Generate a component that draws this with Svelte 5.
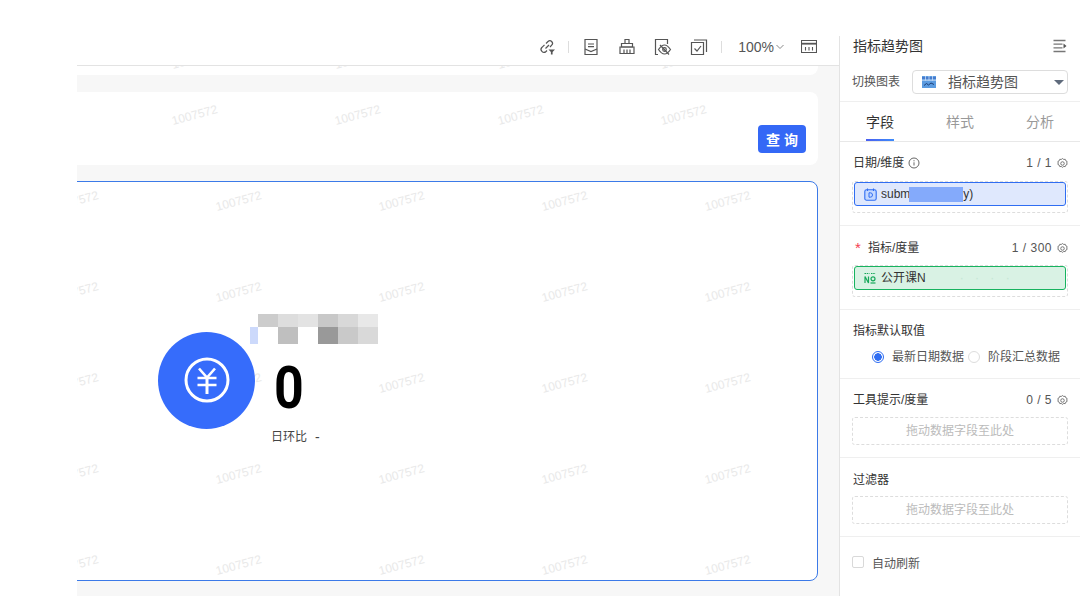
<script>
  const wmText = '1007572'
  const strip = Array(4).fill(wmText)
  const row = Array(4).fill(wmText)
  const big = Array(5 * 6).fill(wmText)

  const mosaicTop = ['#cccccc', '#dddddd', '#e3e3e3', '#c8c8c8', '#d8d8d8', '#e8e8e8']
  const mosaicBottom = ['#ffffff', '#bfbfbf', '#ffffff', '#999999', '#c9c9c9', '#d9d9d9']
</script>

<div class="page">
  <div class="left"></div>

  <div class="main">
    <div class="toolbar">
      <svg class="ic i-link" width="18" height="18" viewBox="0 0 18 18" fill="none" stroke="#555" stroke-width="1.2">
        <path d="M8 5.500l2-2a2.600 2.600 0 0 1 3.700 3.700L12 9" />
        <path d="M6.500 6.800L4 9.300a2.900 2.900 0 0 0 4 4.200l1-1" />
        <path d="M7.500 10.500L11 7" />
        <path d="M10.500 11.500h6.500l-2.400 2.600v2.400h-1.700v-2.400z" fill="#555" stroke="none" />
      </svg>
      <i class="sep s1"></i>
      <svg class="ic i-report" width="16" height="18" viewBox="0 0 16 18" fill="none" stroke="#555" stroke-width="1.2">
        <path d="M2 1.500h12v15H2z" />
        <path d="M5 6h6M5 8.700h6" />
        <path d="M2 11l6 2.600 6-2.600" />
      </svg>
      <svg class="ic i-brush" width="18" height="18" viewBox="0 0 18 18" fill="none" stroke="#555" stroke-width="1.2">
        <path d="M7 1.500h4v4H7z" />
        <path d="M3.500 5.500h11v3.500h-11z" />
        <path d="M2 9h14v6.500H2z" />
        <path d="M6 11.500v4M9 11.500v4M12 11.500v4" />
      </svg>
      <svg class="ic i-eye" width="18" height="18" viewBox="0 0 18 18" fill="none" stroke="#555" stroke-width="1.2">
        <path d="M4 16.500H1.500v-15h12V6" />
        <path d="M4.500 11.500c2-3 4-4.500 6-4.500s4 1.500 6 4.500c-2 3-4 4.500-6 4.500s-4-1.500-6-4.500z" />
        <circle cx="10.500" cy="11.500" r="1.800" />
        <path d="M6 7l9 9.500" />
      </svg>
      <svg class="ic i-check" width="18" height="18" viewBox="0 0 18 18" fill="none" stroke="#555" stroke-width="1.2">
        <path d="M1.500 4.500h12v12h-12z" />
        <path d="M4 2h12.500v12" />
        <path d="M4.500 10.500l2.500 2.500 4-5" />
      </svg>
      <i class="sep s2"></i>
      <span class="zoom">100%</span>
      <svg class="chev" width="8" height="6" viewBox="0 0 8 6" fill="none" stroke="#888" stroke-width="1"><path d="M0.500 1l3.500 3.500L7.500 1" /></svg>
      <svg class="ic" width="16" height="13" viewBox="0 0 16 13" fill="none" stroke="#555" stroke-width="1.1">
        <path d="M0.500 0.500h15v12h-15z" />
        <path d="M0.500 3.700h15" stroke-width="1.800" />
        <path d="M4.500 7v3.500M8 7v3.500M11.500 7v3.500" />
      </svg>
    </div>

    <div class="canvas">
      <div class="card strip">
        <div class="wm wm-strip">{#each strip as t}<span>{t}</span>{/each}</div>
      </div>

      <div class="card query">
        <div class="wm wm-query">{#each row as t}<span>{t}</span>{/each}</div>
        <button class="btn">查 询</button>
      </div>

      <div class="card chart">
        <div class="wm wm-chart">{#each big as t}<span>{t}</span>{/each}</div>
        <div class="kpi">
          <div class="coin">
            <svg width="46" height="46" viewBox="0 0 46 46" fill="none" stroke="#fff" stroke-width="3">
              <circle cx="23" cy="23" r="21" />
              <path d="M15 11.500l8 9 8-9" stroke-width="2.600" />
              <path d="M13.500 21h19M13.500 28h19" stroke-width="2.600" />
              <path d="M23 20v17" stroke-width="3" />
            </svg>
          </div>
          <div class="kpi-body">
            <div class="mosaic">
              <i class="m-gap"></i>{#each mosaicTop as c}<i class="m-a" style="background:{c}"></i>{/each}
              <i class="m-b m-gap" style="background:#ccd9fb"></i>{#each mosaicBottom as c}<i class="m-b" style="background:{c}"></i>{/each}
            </div>
            <div class="value"><span>0</span></div>
            <div class="ratio"><span>日环比</span><span class="dash">-</span></div>
          </div>
        </div>
      </div>
    </div>
  </div>

  <aside class="panel">
    <div class="head">
      <div class="title-row">
        <span class="title">指标趋势图</span>
        <svg width="14" height="14" viewBox="0 0 14 14" fill="none" stroke="#777" stroke-width="1.300">
          <path d="M0.500 1.500h12M0.500 5.200h9M0.500 8.800h9M0.500 12.500h12" />
          <path d="M10.500 4.500l3 2.500-3 2.500z" fill="#555" stroke="none" />
        </svg>
      </div>
      <div class="switch-row">
        <span class="switch-label">切换图表</span>
        <div class="select">
          <svg width="14" height="12" viewBox="0 0 14 12">
            <rect width="14" height="12" fill="#5b9be0" />
            <path d="M0 2h14" stroke="#3f6fc4" stroke-width="1.400" />
            <path d="M0 4.200h14" stroke="#dbe8fa" stroke-width="0.800" />
            <path d="M3.500 0v4.500M7 0v4.500M10.500 0v4.500" stroke="#dbe8fa" stroke-width="0.700" />
            <path d="M2 9.500l2.500-2 2 1.500 2.500-2 3 1.500" fill="none" stroke="#1c3f78" stroke-width="1" />
          </svg>
          <span class="select-text">指标趋势图</span>
          <i class="caret"></i>
        </div>
      </div>
    </div>

    <div class="tabs">
      <span class="tab active">字段</span>
      <span class="tab">样式</span>
      <span class="tab">分析</span>
    </div>

    <section class="sec">
      <div class="sec-title">
        <span>日期/维度</span>
        <svg class="info" width="12" height="12" viewBox="0 0 12 12" fill="none" stroke="#555" stroke-width="0.900">
          <circle cx="6" cy="6" r="5" />
          <path d="M6 5.300v3.200M6 3.200v1.100" />
        </svg>
        <span class="count">1 / 1</span>
        {@render gear()}
      </div>
      <div class="drop has-chip">
        <div class="chip date">
          <svg width="13" height="13" viewBox="0 0 13 13" fill="none" stroke="#2f6df2" stroke-width="1.100">
            <rect x="0.800" y="1.800" width="11.400" height="10.400" rx="1.800" fill="#c4d8ff" />
            <path d="M3.500 0.500v2.500M9.500 0.500v2.500" />
            <path d="M5 4.800h1.300a1.900 1.900 0 0 1 0 4.400H5z" stroke-width="1" />
          </svg>
          <span class="chip-text">subm</span><i class="redact"></i><span class="chip-text">y)</span>
        </div>
      </div>
    </section>

    <section class="sec low">
      <div class="sec-title">
        <span class="req">*</span>
        <span>指标/度量</span>
        <span class="count">1 / 300</span>
        {@render gear()}
      </div>
      <div class="drop has-chip">
        <div class="chip metric">
          <svg width="12" height="12" viewBox="0 0 12 12" fill="none" stroke="#16a85a" stroke-width="1.200">
            <path d="M0.500 1.500h5M7 1.500h4.500" stroke-dasharray="1.500 0.700" />
            <path d="M1 11V4.500l3.500 6.500V4.500" />
            <circle cx="9" cy="6.800" r="2" />
            <path d="M6.500 11h5" />
          </svg>
          <span class="chip-text">公开课N</span>
          <span class="faint">· · · ·</span>
        </div>
      </div>
    </section>

    <section class="sec radios-sec">
      <div class="sec-title"><span>指标默认取值</span></div>
      <div class="radios">
        <i class="radio on"></i><span class="radio-label">最新日期数据</span>
        <i class="radio"></i><span class="radio-label">阶段汇总数据</span>
      </div>
    </section>

    <section class="sec tight">
      <div class="sec-title">
        <span>工具提示/度量</span>
        <span class="count">0 / 5</span>
        {@render gear()}
      </div>
      <div class="drop empty">拖动数据字段至此处</div>
    </section>

    <section class="sec tight low">
      <div class="sec-title"><span>过滤器</span></div>
      <div class="drop empty">拖动数据字段至此处</div>
    </section>

    <label class="refresh">
      <i class="check"></i>
      <span>自动刷新</span>
    </label>
  </aside>
</div>

{#snippet gear()}
  <svg class="gear" width="11" height="11" viewBox="0 0 10 10" fill="none" stroke="#666" stroke-width="0.800">
    <path d="M5 0.500l1.100 0.800 1.400-0.100 0.500 1.300 1.200 0.700-0.300 1.300 0.300 1.300-1.200 0.700-0.500 1.300-1.400-0.100-1.100 0.800-1.100-0.800-1.400 0.100-0.500-1.300-1.200-0.700 0.300-1.300-0.300-1.300 1.200-0.700 0.500-1.300 1.400 0.100z" />
    <circle cx="5" cy="5" r="1.600" />
  </svg>
{/snippet}

<style>
  :global(body) {
    margin: 0;
    background: #fff;
  }

  .page {
    display: flex;
    width: 1090px;
    height: 604px;
    padding-top: 36px;
    padding-right: 10px;
    box-sizing: border-box;
    overflow: hidden;
    font-family: "Liberation Sans", "Noto Sans CJK SC", sans-serif;
    color: #333;
  }

  .left {
    width: 77px;
    flex: none;
  }

  .main {
    width: 762px;
    height: 560px;
    display: flex;
    flex-direction: column;
  }

  .toolbar {
    height: 21px;
    flex: none;
    display: flex;
    align-items: center;
    justify-content: flex-end;
    padding: 0 22px 8px 0;
    border-bottom: 1px solid #e3e3e3;
  }

  .ic {
    display: block;
  }

  .i-link {
    margin-right: 12px;
  }

  .i-report {
    margin-right: 19px;
  }

  .i-brush {
    margin-right: 18px;
  }

  .i-eye {
    margin-right: 18px;
  }

  .i-check {
    margin-right: 13px;
  }

  .sep {
    width: 1px;
    height: 12px;
    background: #ddd;
  }

  .s1 {
    margin-right: 14px;
  }

  .s2 {
    margin-right: 16px;
  }

  .zoom {
    font-size: 14px;
    color: #555;
  }

  .chev {
    margin: 0 17px 0 2px;
  }

  .canvas {
    flex: 1;
    background: #f7f7f7;
    overflow: hidden;
    min-height: 0;
  }

  .card {
    position: relative;
    background: #fff;
    margin: 0 21px 0 -20px;
    overflow: hidden;
  }

  .strip {
    height: 9px;
    border-radius: 0 0 8px 8px;
  }

  .query {
    height: 73px;
    margin-top: 17px;
    border-radius: 8px;
    display: flex;
    align-items: flex-end;
    justify-content: flex-end;
    padding: 0 12px 12px 0;
    box-sizing: border-box;
  }

  .btn {
    position: relative;
    width: 48px;
    height: 28px;
    border: 0;
    padding: 0;
    border-radius: 4px;
    background: #3468f6;
    color: #fff;
    font: 700 14px "Liberation Sans", "Noto Sans CJK SC", sans-serif;
  }

  .chart {
    height: 400px;
    margin-top: 16px;
    border: 1px solid #3c7ae8;
    border-radius: 8px;
    box-sizing: border-box;
    display: flex;
    align-items: center;
    padding-left: 100px;
  }

  .wm {
    position: absolute;
    display: grid;
    grid-template-columns: repeat(5, 163px);
    grid-auto-rows: 91px;
    pointer-events: none;
  }

  .wm span {
    display: flex;
    align-items: center;
    justify-content: center;
    font-size: 12px;
    color: #e9e9e9;
    transform: rotate(-15deg);
  }

  .wm-strip {
    left: 55.5px;
    top: -53.5px;
  }

  .wm-query {
    left: 55.5px;
    top: -23.5px;
  }

  .wm-chart {
    left: -64.5px;
    top: -27.5px;
  }

  .kpi {
    position: relative;
    display: flex;
    align-items: center;
    margin-top: -2px;
  }

  .coin {
    width: 97px;
    height: 97px;
    flex: none;
    border-radius: 50%;
    background: #366cfb;
    display: flex;
    align-items: center;
    justify-content: center;
  }

  .kpi-body {
    margin-left: -5px;
    display: flex;
    flex-direction: column;
  }

  .mosaic {
    display: grid;
    grid-template-columns: 8px repeat(6, 20px);
    grid-template-rows: 13px 17px;
  }

  .m-a,
  .m-b {
    display: block;
  }

  .value {
    margin: 19px 0 0 24px;
    height: 50px;
    line-height: 50px;
    font-family: Roboto, sans-serif;
    font-size: 59px;
    font-weight: 700;
    color: #000;
  }

  .value span {
    display: inline-block;
    transform: scaleX(0.88);
    transform-origin: left center;
  }

  .ratio {
    margin: 15px 0 0 21px;
    display: flex;
    font-size: 12px;
    line-height: 18px;
    color: #444;
  }

  .dash {
    margin-left: 8px;
    font-size: 14px;
  }

  .panel {
    width: 241px;
    height: 560px;
    flex: none;
    border-left: 1px solid #e3e3e3;
    box-sizing: border-box;
    display: flex;
    flex-direction: column;
  }

  .head {
    height: 66px;
    flex: none;
    box-sizing: border-box;
    border-bottom: 1px solid #efefef;
    padding: 0 12px 0 13px;
  }

  .title-row {
    height: 20px;
    display: flex;
    align-items: center;
    justify-content: space-between;
    margin-right: 1px;
  }

  .title {
    font-size: 14px;
    line-height: 20px;
  }

  .switch-row {
    margin-top: 14px;
    margin-left: -1px;
    display: flex;
    align-items: center;
  }

  .switch-label {
    width: 60px;
    font-size: 12px;
    line-height: 22px;
    color: #555;
  }

  .select {
    position: relative;
    width: 156px;
    height: 24px;
    box-sizing: border-box;
    border: 1px solid #ddd;
    border-radius: 4px;
    display: flex;
    align-items: center;
    padding-left: 9px;
  }

  .select-text {
    margin: -2px 0 0 12px;
    font-size: 14px;
    color: #555;
  }

  .caret {
    position: absolute;
    right: 3px;
    top: 9px;
    width: 0;
    height: 0;
    border-left: 5px solid transparent;
    border-right: 5px solid transparent;
    border-top: 5px solid #5f6b7c;
  }

  .tabs {
    height: 40px;
    flex: none;
    box-sizing: border-box;
    border-bottom: 1px solid #e8e8e8;
    display: flex;
    padding-left: 26px;
    gap: 52px;
  }

  .tab {
    position: relative;
    width: 28px;
    font-size: 14px;
    line-height: 40px;
    color: #999;
  }

  .tab.active {
    color: #333;
  }

  .tab.active::after {
    content: "";
    position: absolute;
    left: 0;
    right: 0;
    bottom: 0;
    height: 2px;
    background: linear-gradient(90deg, #4a5ff0, #3d8bfa);
  }

  .sec {
    flex: none;
    padding: 12px 12px 12px 13px;
    border-bottom: 1px solid #efefef;
  }

  .sec.low {
    padding-top: 13px;
  }

  .sec-title {
    height: 18px;
    margin-bottom: 9px;
    display: flex;
    align-items: center;
    font-size: 12px;
    line-height: 18px;
    color: #333;
  }

  .low .sec-title {
    margin-bottom: 8px;
  }

  .tight .sec-title {
    margin-bottom: 8px;
  }

  .tight.low .sec-title {
    margin-bottom: 7px;
  }

  .info {
    margin-left: 4px;
  }

  .req {
    width: 13px;
    color: #f5404f;
    font-size: 15px;
    margin-left: 2px;
  }

  .count {
    margin-left: auto;
    color: #555;
    letter-spacing: 0.5px;
  }

  .gear {
    margin-left: 5px;
    flex: none;
  }

  .drop {
    margin-left: -1px;
    width: 216px;
    box-sizing: border-box;
    border: 1px dashed #ddd;
    border-radius: 3px;
  }

  .drop.has-chip {
    height: 32px;
    padding: 0 1px;
  }

  .drop.empty {
    height: 28px;
    text-align: center;
    font-size: 12px;
    line-height: 26px;
    color: #bbb;
  }

  .chip {
    height: 24px;
    box-sizing: border-box;
    border-radius: 3px;
    display: flex;
    align-items: center;
    padding-left: 9px;
    font-size: 12px;
    line-height: 20px;
    color: #333;
  }

  .chip.date {
    background: #dfe8fd;
    border: 1px solid #2f6df2;
  }

  .chip.metric {
    background: #d9f2e4;
    border: 1px solid #17b35f;
  }

  .chip-text {
    margin-left: 4px;
  }

  .metric .chip-text {
    margin-left: 5px;
  }

  .redact {
    width: 54px;
    height: 15px;
    margin-left: -1px;
    background: #84aafb;
  }

  .redact + .chip-text {
    margin-left: 0;
  }

  .faint {
    margin-left: 34px;
    letter-spacing: 4px;
    color: #c6e6d4;
  }

  .radios-sec {
    height: 69px;
    box-sizing: border-box;
    padding-top: 12px;
  }

  .radios-sec .sec-title {
    margin-bottom: 0;
  }

  .radios {
    margin-top: 8px;
    padding-left: 19px;
    display: flex;
    align-items: center;
    font-size: 12px;
    line-height: 18px;
    color: #555;
  }

  .radio {
    width: 12px;
    height: 12px;
    flex: none;
    box-sizing: border-box;
    border: 1px solid #ddd;
    border-radius: 50%;
    background: #fff;
  }

  .radio.on {
    border-color: #2f6df2;
    background: radial-gradient(circle, #2f6df2 0 3.5px, #fff 4px);
  }

  .radio-label {
    margin: 0 4px 0 8px;
  }

  .refresh {
    margin: 19px 0 0 12px;
    height: 12px;
    display: flex;
    align-items: center;
    font-size: 12px;
    color: #555;
  }

  .check {
    width: 12px;
    height: 12px;
    box-sizing: border-box;
    border: 1px solid #d9d9d9;
    border-radius: 2px;
    margin-right: 8px;
  }
</style>
